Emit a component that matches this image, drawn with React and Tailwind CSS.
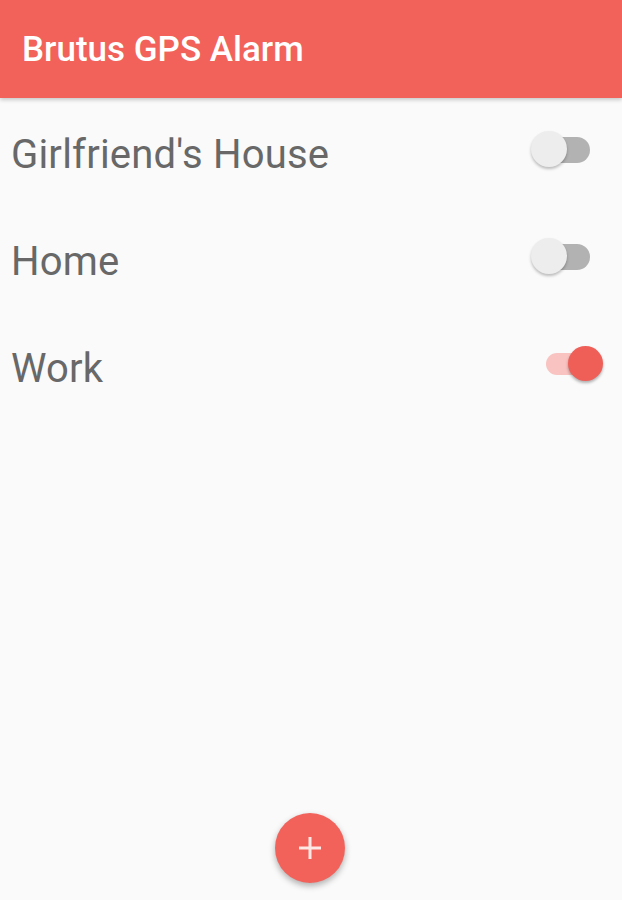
import React from "react";

const alarms = [
  { name: "Girlfriend's House", on: false },
  { name: "Home", on: false },
  { name: "Work", on: true },
];

function Toggle({ on }) {
  return (
    <div className="relative w-[60px] h-[40px] flex items-center -mt-[9px]">
      <div className={on ? "ml-[14px] w-[44px] h-[22px] rounded-full bg-[#f8c3c0]" : "ml-[10px] w-[48px] h-[26px] rounded-full bg-[#b2b2b2]"} />
      <div
        className={
          on
            ? "absolute right-[-11px] top-[2px] w-[35px] h-[35px] rounded-full bg-[#ef5f58] shadow-[0_2px_3px_rgba(0,0,0,0.3)]"
            : "absolute left-[-1px] top-[1px] w-[36px] h-[36px] rounded-full bg-[#ededed] shadow-[0_2px_3px_rgba(0,0,0,0.25)]"
        }
      />
    </div>
  );
}

export default function App() {
  return (
    <div className="relative w-[622px] h-[900px] bg-[#fafafa] overflow-hidden" style={{ fontFamily: "Roboto, 'Liberation Sans', sans-serif" }}>
      <div className="h-[98px] bg-[#f2625b] flex items-center px-[22px] shadow-[0_2px_4px_rgba(0,0,0,0.2)] relative z-10">
        <h1 className="text-white text-[35px] font-medium mt-[3px]">Brutus GPS Alarm</h1>
      </div>
      <div className="pt-[3px]">
        {alarms.map((a) => (
          <div key={a.name} className="h-[107px] flex items-center justify-between pl-[11px] pr-[30px]">
            <span className="text-[#686868] text-[40px] tracking-[0.2px]">{a.name}</span>
            <Toggle on={a.on} />
          </div>
        ))}
      </div>
      <button className="absolute left-[275px] top-[813px] w-[70px] h-[70px] rounded-full bg-[#f2625b] shadow-[0_3px_6px_rgba(0,0,0,0.3)] flex items-center justify-center">
        <svg width="26" height="26" viewBox="0 0 26 26">
          <path d="M13 2v22M2 13h22" stroke="#fde8e6" strokeWidth="3" />
        </svg>
      </button>
    </div>
  );
}
